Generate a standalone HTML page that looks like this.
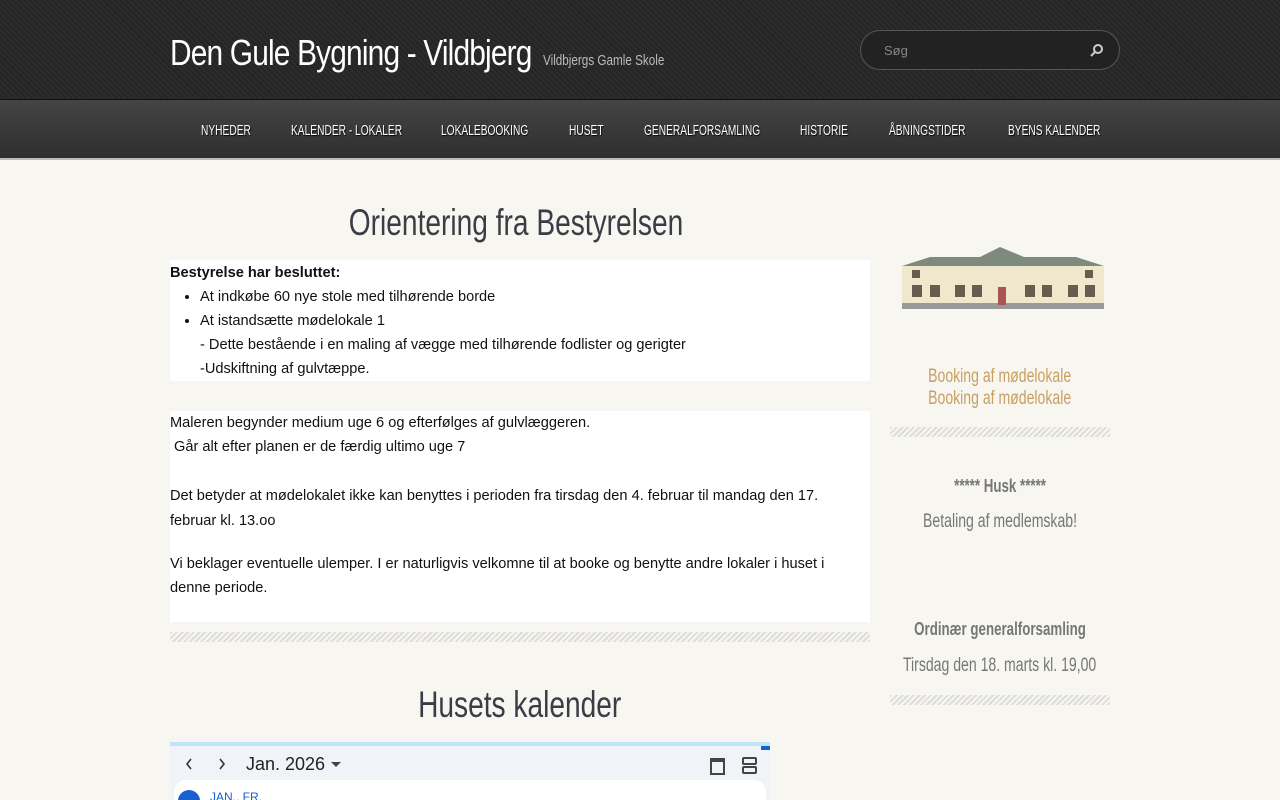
<!DOCTYPE html>
<html><head><meta charset="utf-8"><style>
*{margin:0;padding:0;box-sizing:border-box}
html,body{width:1280px;height:800px;overflow:hidden}
body{background:#f7f6f0;font-family:"Liberation Sans",sans-serif}
.n{font-family:"Liberation Sans Narrow","Liberation Sans",sans-serif}
#hd{position:absolute;left:0;top:0;width:1280px;height:100px;background:repeating-linear-gradient(45deg,#2c2c2c 0 2px,#252525 2px 4px);border-bottom:1px solid #111}
#hd h1{position:absolute;left:170px;top:32px;font-weight:normal;color:#fff;font-size:36px;letter-spacing:-1px;transform:scaleX(.83);transform-origin:left;white-space:nowrap}
#hd .sub{position:absolute;left:543px;top:52px;color:#bbb;font-size:15px;transform:scaleX(.78);transform-origin:left;white-space:nowrap}
#srch{position:absolute;left:860px;top:30px;width:260px;height:40px;border:1px solid #555;border-radius:20px;background:#222}
#srch span{position:absolute;left:23px;top:12px;color:#888;font-size:13px}
#nav{position:absolute;left:0;top:100px;width:1280px;height:60px;background:linear-gradient(#444,#2f2f2f);border-bottom:2px solid #bbb}
#nav a{position:absolute;top:22px;color:#fff;font-size:15px;text-shadow:1px 1px 1px #000;transform:scaleX(.68);transform-origin:left;white-space:nowrap}
h2{position:absolute;font-weight:normal;color:#3a3d45;font-size:37px;text-align:center}
h2 span{display:inline-block;white-space:nowrap;transform:scaleX(.76)}
#box{position:absolute;left:170px;top:260px;width:700px;height:362px;background:#fff;font-size:14.6px;color:#111;line-height:24px}
.stripe{position:absolute;height:10px;background:repeating-linear-gradient(135deg,#ddd 0 2px,#f7f6f0 2px 4px)}
.side{position:absolute;left:800px;width:400px;text-align:center;font-size:19px}
.side span{display:inline-block;transform:scaleX(.74);white-space:nowrap}
</style></head><body>
<div id="hd"><h1 class="n">Den Gule Bygning - Vildbjerg</h1><div class="sub n">Vildbjergs Gamle Skole</div>
<div id="srch"><span>Søg</span><svg style="position:absolute;left:229px;top:12px" width="14" height="14" viewBox="0 0 14 14"><circle cx="8" cy="6" r="4" fill="none" stroke="#ccc" stroke-width="2"/><path d="M5 9L1 13" stroke="#ccc" stroke-width="2"/></svg></div></div>
<div id="nav" class="n">
<a style="left:201px">NYHEDER</a><a style="left:291px">KALENDER - LOKALER</a><a style="left:441px">LOKALEBOOKING</a><a style="left:569px">HUSET</a><a style="left:644px">GENERALFORSAMLING</a><a style="left:800px">HISTORIE</a><a style="left:889px">ÅBNINGSTIDER</a><a style="left:1008px">BYENS KALENDER</a></div>
<h2 class="n" style="left:166px;top:202px;width:700px"><span>Orientering fra Bestyrelsen</span></h2>
<div id="box">
<div style="font-weight:bold;margin-top:1px">Bestyrelse har besluttet:</div>
<ul style="margin-left:30px"><li>At indkøbe 60 nye stole med tilhørende borde</li><li>At istandsætte mødelokale 1<br>- Dette bestående i en maling af vægge med tilhørende fodlister og gerigter<br>-Udskiftning af gulvtæppe.</li></ul>
<div style="position:absolute;top:121px;left:0;height:30px;background:#f7f6f0;width:700px"></div>
<div style="position:absolute;top:151px">Maleren begynder medium uge 6 og efterfølges af gulvlæggeren.<br>&nbsp;Går alt efter planen er de færdig ultimo uge 7</div>
<div style="position:absolute;top:224px;width:680px;line-height:25px">Det betyder at mødelokalet ikke kan benyttes i perioden fra tirsdag den 4. februar til mandag den 17. februar kl. 13.oo</div>
<div style="position:absolute;top:292px;width:680px">Vi beklager eventuelle ulemper. I er naturligvis velkomne til at booke og benytte andre lokaler i huset i denne periode.</div>
</div>
<div class="stripe" style="left:170px;top:632px;width:700px"></div>
<h2 class="n" style="left:170px;top:684px;width:700px"><span>Husets kalender</span></h2>
<div style="position:absolute;left:170px;top:742px;width:600px;height:58px;background:#f0f3f8;border-top:4px solid #c2e4fb;overflow:hidden">
<div style="position:absolute;right:0;top:0;width:9px;height:4px;background:#1a5fd0"></div>
<svg style="position:absolute;left:14px;top:11px" width="10" height="14" viewBox="0 0 10 14"><path d="M7 2L3 7L7 12" fill="none" stroke="#333" stroke-width="1.6"/></svg>
<svg style="position:absolute;left:47px;top:11px" width="10" height="14" viewBox="0 0 10 14"><path d="M3 2L7 7L3 12" fill="none" stroke="#333" stroke-width="1.6"/></svg>
<span style="position:absolute;left:76px;top:8px;font-size:18px;color:#222">Jan. 2026</span>
<svg style="position:absolute;left:161px;top:16px" width="10" height="6"><path d="M0 0H10L5 5Z" fill="#444"/></svg>
<div style="position:absolute;left:540px;top:12px;width:15px;height:17px;border:2px solid #444;border-top-width:4px"></div>
<div style="position:absolute;left:572px;top:11px;width:15px;height:8px;border:2px solid #444;border-radius:2px"></div><div style="position:absolute;left:572px;top:20px;width:15px;height:8px;border:2px solid #444;border-radius:2px"></div>
<div style="position:absolute;left:4px;top:34px;width:592px;height:30px;background:#fff;border-radius:12px"><div style="position:absolute;left:4px;top:10px;width:22px;height:22px;border-radius:50%;background:#1a5fd0"></div><span style="position:absolute;left:36px;top:10px;font-size:12px;color:#1a5fd0">JAN., FR.</span></div>
</div>
<svg style="position:absolute;left:900px;top:225px" width="206" height="86" viewBox="0 0 206 86"><path d="M2 41L30 32H80L100 22L124 32H176L204 41Z" fill="#7d8a7c"/><rect x="2" y="41" width="202" height="40" fill="#efe8cc"/><rect x="2" y="78" width="202" height="6" fill="#999"/>
<g fill="#6a5a50"><rect x="12" y="60" width="10" height="12"/><rect x="30" y="60" width="10" height="12"/><rect x="55" y="60" width="10" height="12"/><rect x="72" y="60" width="10" height="12"/><rect x="125" y="60" width="10" height="12"/><rect x="142" y="60" width="10" height="12"/><rect x="168" y="60" width="10" height="12"/><rect x="185" y="60" width="10" height="12"/><rect x="12" y="45" width="8" height="8"/><rect x="185" y="45" width="8" height="8"/></g><rect x="98" y="62" width="8" height="18" fill="#a55"/></svg>
<div class="side n" style="top:366px;color:#c9a062;line-height:22px"><span>Booking af mødelokale</span><br><span>Booking af mødelokale</span></div>
<div class="stripe" style="left:890px;top:427px;width:220px"></div>
<div class="side n" style="top:476px;color:#777;font-weight:bold;font-size:18px"><span>***** Husk *****</span></div>
<div class="side n" style="top:511px;color:#777"><span>Betaling af medlemskab!</span></div>
<div class="side n" style="top:619px;color:#777;font-weight:bold;font-size:18px"><span>Ordinær generalforsamling</span></div>
<div class="side n" style="top:655px;color:#777"><span>Tirsdag den 18. marts kl. 19,00</span></div>
<div class="stripe" style="left:890px;top:695px;width:220px"></div>
</body></html>
